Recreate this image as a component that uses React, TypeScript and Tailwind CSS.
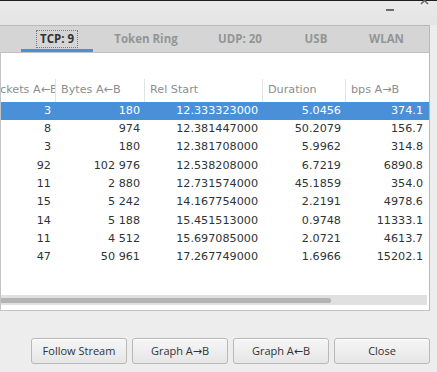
import React from 'react';

type Row = [string, string, string, string, string];

const rows: Row[] = [
    ['3', '180', '12.333323000', '5.0456', '374.1'],
    ['8', '974', '12.381447000', '50.2079', '156.7'],
    ['3', '180', '12.381708000', '5.9962', '314.8'],
    ['92', '102 976', '12.538208000', '6.7219', '6890.8'],
    ['11', '2 880', '12.731574000', '45.1859', '354.0'],
    ['15', '5 242', '14.167754000', '2.2191', '4978.6'],
    ['14', '5 188', '15.451513000', '0.9748', '11333.1'],
    ['11', '4 512', '15.697085000', '2.0721', '4613.7'],
    ['47', '50 961', '17.267749000', '1.6966', '15202.1'],
];

const tabs = [
    { label: 'TCP: 9', w: 'w-[72px]', active: true },
    { label: 'Token Ring', w: 'w-[106px]', active: false },
    { label: 'UDP: 20', w: 'w-[82px]', active: false },
    { label: 'USB', w: 'w-[70px]', active: false },
    { label: 'WLAN', w: 'w-[71px]', active: false },
];

const colW = ['w-[54px]', 'w-[89px]', 'w-[118px]', 'w-[83px]', 'w-[82px]'];

const buttons = ['Follow Stream', 'Graph A→B', 'Graph A←B', 'Close'];

const App: React.FC = () => {
    return (
        <div className="w-[437px] h-[372px] overflow-hidden bg-[#ededed] flex flex-col font-['Open_Sans','DejaVu_Sans',sans-serif]">
            {/* Title bar */}
            <div className="h-px bg-[#1e1e1e]" />
            <div className="h-[24px] flex items-start justify-end bg-gradient-to-b from-[#eaeaea] to-[#e4e4e4]">
                <div className="mt-[8px] mr-[26px] w-[8px] h-[2px] bg-[#6b6b6b]" />
                <svg width="9" height="9" viewBox="0 0 9 9" className="-mt-[5px] mr-[8px]">
                    <path d="M1 1 L8 8 M8 1 L1 8" stroke="#6b6b6b" strokeWidth="1.6" />
                </svg>
            </div>

            {/* Notebook */}
            <div className="w-[430px] border-t border-r border-[#b9b9b9]">
                <div className="h-[27px] bg-[#d5d5d5] border-b border-[#c2c2c2] flex pl-[21px]">
                    {tabs.map((t) => (
                        <div
                            key={t.label}
                            className={`${t.w} h-full flex items-center justify-center text-[11.5px] font-bold ${
                                t.active ? 'text-[#2e3436] border-b-[3px] border-[#4a90d9] pt-[3px]' : 'text-[#929595]'
                            }`}
                        >
                            {t.active ? (
                                <span className="px-[3px] border border-dotted border-[#7a7a7a] leading-[16px]">{t.label}</span>
                            ) : (
                                t.label
                            )}
                        </div>
                    ))}
                </div>

                <div className="h-[258px] bg-white border-l border-b border-[#c4c4c4] flex flex-col font-['DejaVu_Sans',sans-serif] text-[11.2px]">
                    <div className="h-[26px]" />
                    {/* Header */}
                    <div className="h-[23px] flex text-[#8b8e8f]">
                        <div className={`${colW[0]} overflow-hidden flex items-center`}>
                            <span className="whitespace-nowrap -ml-[14px]">Packets A←B</span>
                        </div>
                        {['Bytes A←B', 'Rel Start', 'Duration', 'bps A→B'].map((h, i) => (
                            <div key={h} className={`${colW[i + 1]} border-l border-[#e3e3e3] pl-[5px] flex items-center whitespace-nowrap`}>
                                {h}
                            </div>
                        ))}
                    </div>
                    {/* Rows */}
                    <div className="flex flex-col">
                        {rows.map((r, ri) => (
                            <div
                                key={ri}
                                className={`h-[18.3px] flex items-center ${
                                    ri === 0 ? 'bg-[#4a90d9] text-white' : 'text-[#2e3436]'
                                }`}
                            >
                                {r.map((c, ci) => (
                                    <div key={ci} className={`${colW[ci]} text-right pr-[4px] whitespace-nowrap`}>
                                        {c}
                                    </div>
                                ))}
                            </div>
                        ))}
                    </div>
                    <div className="flex-1" />
                    {/* Horizontal scrollbar */}
                    <div className="h-[10px] w-[426px] bg-[#e0e0e0] flex items-center mb-[5px]">
                        <div className="h-[5px] w-[330px] bg-[#b3b3b3] rounded-r-full" />
                    </div>
                </div>
            </div>

            {/* Buttons */}
            <div className="w-[430px] flex justify-end gap-[5px] mt-[27px]">
                {buttons.map((b) => (
                    <button
                        key={b}
                        className="w-[96px] h-[26px] rounded-[3px] border border-[#b8b8b8] bg-gradient-to-b from-[#f6f6f6] to-[#e6e6e6] text-[11px] text-[#2e3436] shadow-[inset_0_1px_0_#ffffff]"
                    >
                        {b}
                    </button>
                ))}
            </div>
        </div>
    );
};

export default App;
